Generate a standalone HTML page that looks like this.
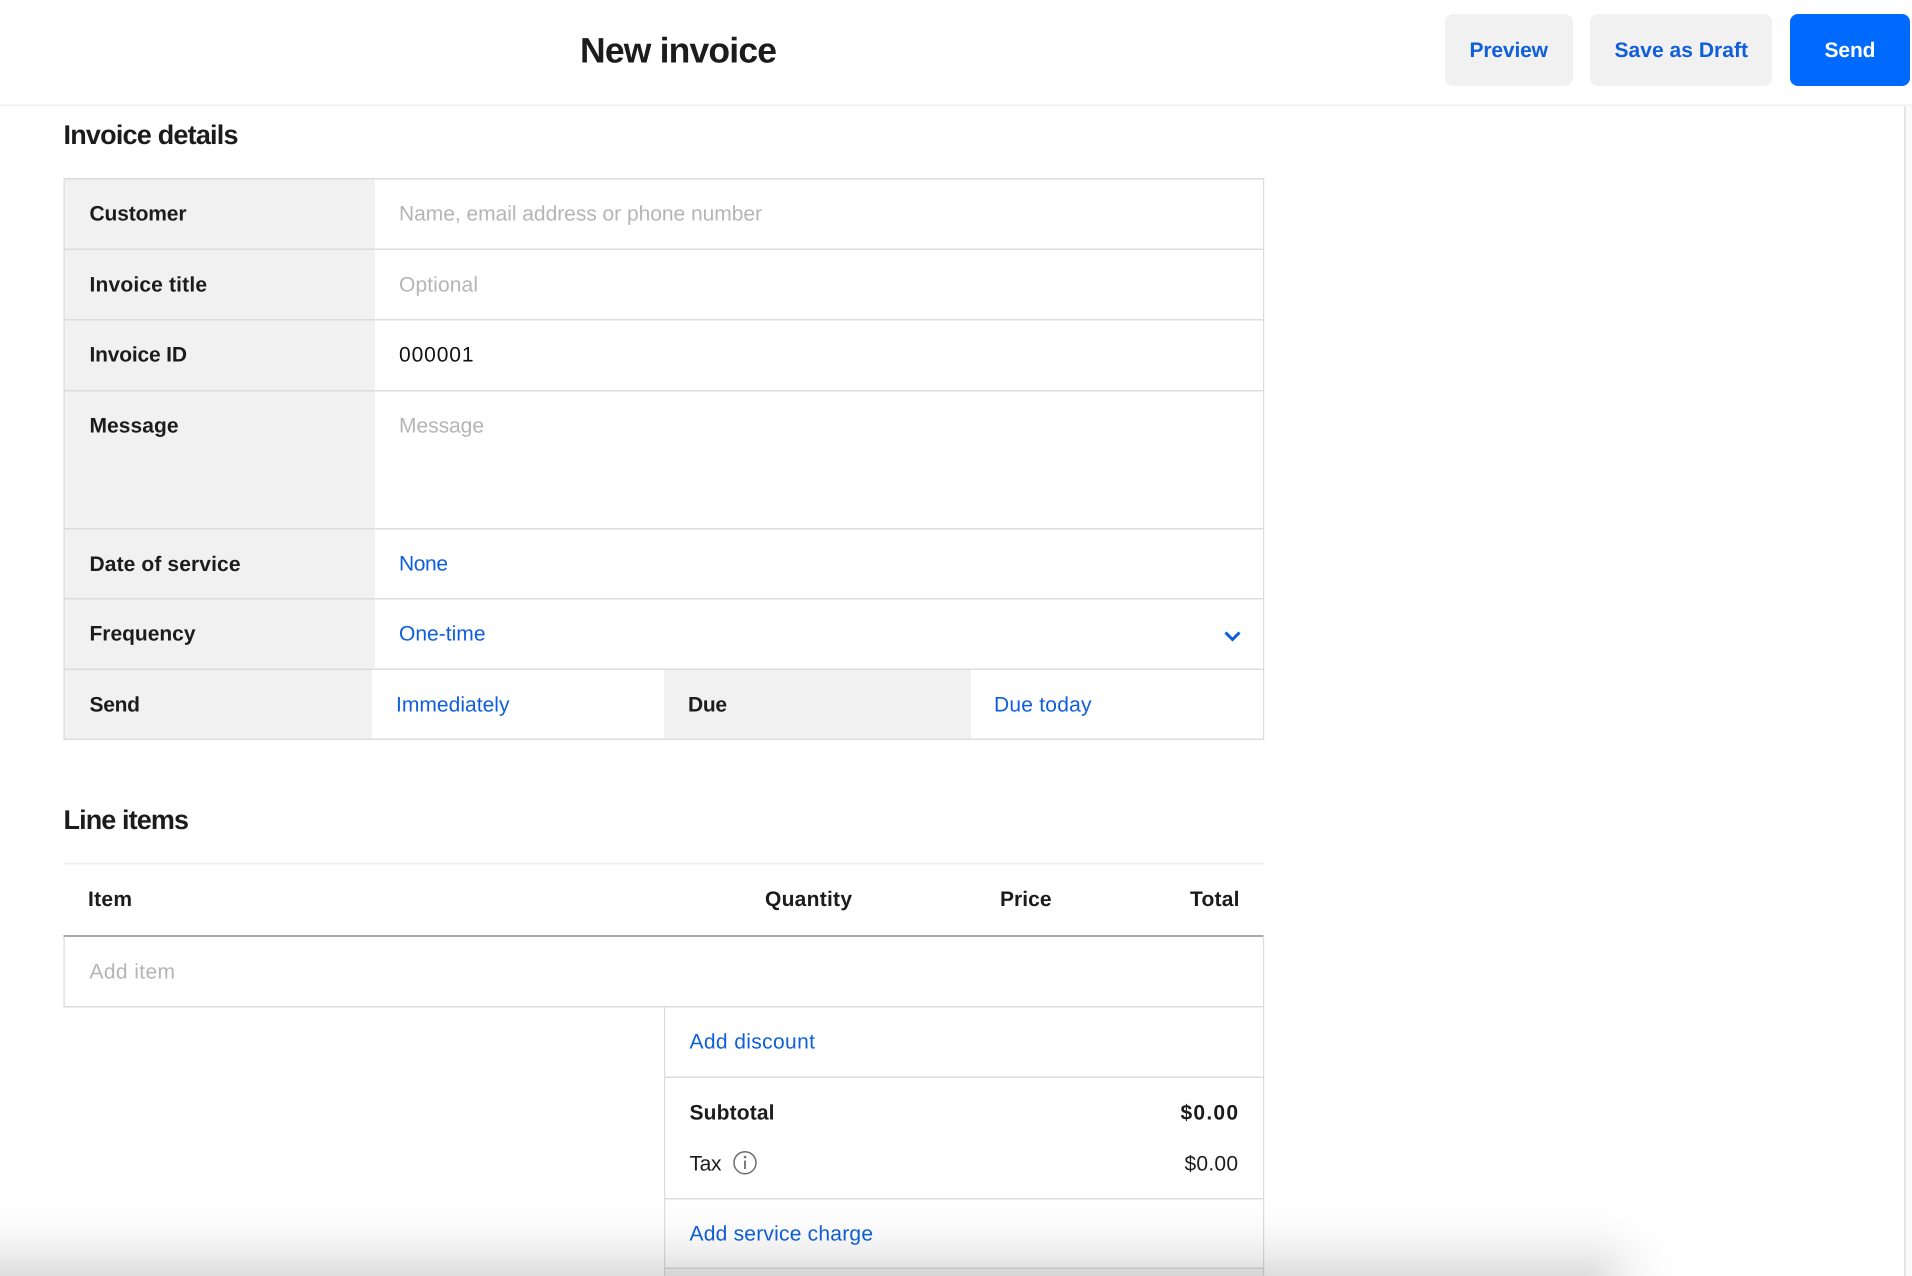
<!DOCTYPE html>
<html lang="en">
<head>
<meta charset="utf-8">
<title>New invoice</title>
<style>
html,body{margin:0;padding:0;background:#fff;overflow:hidden;width:1912px;height:1276px}
svg{display:block}
text{font-family:"Liberation Sans",sans-serif;font-size:21px;fill:#1c1c1c;text-rendering:geometricPrecision}
.b{font-weight:700}
.p{fill:#b5b5b5}
.l{fill:#0f5fdc}
.h{font-weight:700;font-size:27px}
</style>
</head>
<body>
<svg width="1912" height="1276" viewBox="0 0 1912 1276" xmlns="http://www.w3.org/2000/svg">
<defs>
<linearGradient id="vg" x1="0" y1="0" x2="0" y2="1">
<stop offset="0" stop-color="#000" stop-opacity="0"/>
<stop offset=".18" stop-color="#000" stop-opacity=".005"/>
<stop offset=".36" stop-color="#000" stop-opacity=".016"/>
<stop offset=".55" stop-color="#000" stop-opacity=".04"/>
<stop offset=".74" stop-color="#000" stop-opacity=".075"/>
<stop offset="1" stop-color="#000" stop-opacity=".135"/>
</linearGradient>
<radialGradient id="rg" cx="0" cy="1" r="1">
<stop offset="0" stop-color="#000" stop-opacity=".135"/>
<stop offset=".26" stop-color="#000" stop-opacity=".075"/>
<stop offset=".45" stop-color="#000" stop-opacity=".04"/>
<stop offset=".64" stop-color="#000" stop-opacity=".016"/>
<stop offset=".82" stop-color="#000" stop-opacity=".005"/>
<stop offset="1" stop-color="#000" stop-opacity="0"/>
</radialGradient>
</defs>
<rect width="1912" height="1276" fill="#fff"/>

<!-- header -->
<rect x="0" y="104.5" width="1912" height="1.5" fill="#f0f0f0"/>
<rect x="1904" y="106" width="2" height="1170" fill="#e6e6e6"/>
<rect x="1906" y="106" width="6" height="1170" fill="#fbfbfb"/>
<text class="b" x="580" y="62.5" style="font-size:35.5px" textLength="197" lengthAdjust="spacing">New invoice</text>
<rect x="1445" y="14" width="128" height="72" rx="8" fill="#f1f1f1"/>
<rect x="1590" y="14" width="182" height="72" rx="8" fill="#f1f1f1"/>
<rect x="1790" y="14" width="120" height="72" rx="8" fill="#006aff"/>
<text class="b l" x="1469.5" y="57" textLength="78.5" lengthAdjust="spacing">Preview</text>
<text class="b l" x="1614.5" y="57" textLength="133.5" lengthAdjust="spacing">Save as Draft</text>
<text class="b" x="1824.5" y="57" style="fill:#fff" textLength="51" lengthAdjust="spacing">Send</text>

<!-- invoice details -->
<text class="h" x="63.5" y="144" textLength="175" lengthAdjust="spacing">Invoice details</text>
<rect x="64" y="178" width="311" height="491" fill="#f1f1f1"/>
<rect x="64" y="669" width="308" height="70" fill="#f1f1f1"/>
<rect x="664" y="669" width="307" height="70" fill="#f1f1f1"/>
<g fill="#dcdcdc">
<rect x="63.5" y="178" width="1200" height="1.5"/>
<rect x="63.5" y="248.5" width="1200" height="1.5"/>
<rect x="63.5" y="319" width="1200" height="1.5"/>
<rect x="63.5" y="390" width="1200" height="1.5"/>
<rect x="63.5" y="528" width="1200" height="1.5"/>
<rect x="63.5" y="598" width="1200" height="1.5"/>
<rect x="63.5" y="668.5" width="1200" height="1.5"/>
<rect x="63.5" y="738.5" width="1200" height="1.5"/>
<rect x="63.5" y="178" width="1.2" height="562"/>
<rect x="1263" y="178" width="1.2" height="562"/>
</g>
<text class="b" x="89.5" y="220.5" textLength="97" lengthAdjust="spacing">Customer</text>
<text class="b" x="89.5" y="291.5" textLength="117.5" lengthAdjust="spacing">Invoice title</text>
<text class="b" x="89.5" y="361.5" textLength="97.5" lengthAdjust="spacing">Invoice ID</text>
<text class="b" x="89.5" y="432.5" textLength="89" lengthAdjust="spacing">Message</text>
<text class="b" x="89.5" y="571" textLength="151" lengthAdjust="spacing">Date of service</text>
<text class="b" x="89.5" y="640.5" textLength="106" lengthAdjust="spacing">Frequency</text>
<text class="b" x="89.5" y="711.5" textLength="50.5" lengthAdjust="spacing">Send</text>
<text class="b" x="688" y="711.5" textLength="39" lengthAdjust="spacing">Due</text>
<text class="p" x="399" y="220.5" textLength="363" lengthAdjust="spacing">Name, email address or phone number</text>
<text class="p" x="399" y="291.5" textLength="79" lengthAdjust="spacing">Optional</text>
<text x="399" y="361.5" style="fill:#111" textLength="74.5" lengthAdjust="spacing">000001</text>
<text class="p" x="399" y="432.5" textLength="85" lengthAdjust="spacing">Message</text>
<text class="l" x="399" y="570.5" textLength="49" lengthAdjust="spacing">None</text>
<text class="l" x="399" y="640.5" textLength="86.5" lengthAdjust="spacing">One-time</text>
<text class="l" x="396" y="711.5" textLength="113.5" lengthAdjust="spacing">Immediately</text>
<text class="l" x="994" y="711.5" textLength="97.5" lengthAdjust="spacing">Due today</text>
<path d="M1225.5 632.5 L1232.5 639.5 L1239.5 632.5" fill="none" stroke="#0f5fdc" stroke-width="3"/>

<!-- line items -->
<text class="h" x="63.5" y="829" textLength="125.5" lengthAdjust="spacing">Line items</text>
<rect x="63.5" y="862.5" width="1200" height="2" fill="#efefef"/>
<text class="b" x="88" y="906" textLength="44" lengthAdjust="spacing">Item</text>
<text class="b" x="765" y="906" textLength="87" lengthAdjust="spacing">Quantity</text>
<text class="b" x="1000" y="906" textLength="51.5" lengthAdjust="spacing">Price</text>
<text class="b" x="1190" y="906" textLength="49.5" lengthAdjust="spacing">Total</text>
<rect x="63.5" y="935" width="1200" height="2" fill="#a9a9a9"/>
<rect x="664" y="1268.5" width="600" height="8" fill="#f6f6f6"/>
<g fill="#dcdcdc">
<rect x="63.5" y="937" width="1.2" height="69"/>
<rect x="1263" y="937" width="1.2" height="339"/>
<rect x="63.5" y="1006" width="1200" height="1.5"/>
<rect x="664" y="1006" width="1.2" height="270"/>
<rect x="664" y="1076.5" width="600" height="1.5"/>
<rect x="664" y="1198" width="600" height="1.5"/>
<rect x="664" y="1267.5" width="600" height="1.5"/>
</g>
<text class="p" x="89.5" y="978.5" textLength="85.5" lengthAdjust="spacing">Add item</text>
<text class="l" x="689.5" y="1048.5" textLength="125.5" lengthAdjust="spacing">Add discount</text>
<text class="b" x="689.5" y="1119.5" textLength="85" lengthAdjust="spacing">Subtotal</text>
<text class="b" x="1180.5" y="1119.5" textLength="57.5" lengthAdjust="spacing">$0.00</text>
<text x="689.5" y="1170.5" textLength="32" lengthAdjust="spacing">Tax</text>
<text x="1184.5" y="1170.5" textLength="53.5" lengthAdjust="spacing">$0.00</text>
<circle cx="745" cy="1162.7" r="11" fill="none" stroke="#6e6e6e" stroke-width="1.5"/>
<circle cx="745" cy="1157" r="1.3" fill="#6e6e6e"/>
<rect x="744.1" y="1160.5" width="1.8" height="8.5" fill="#6e6e6e"/>
<text class="l" x="689.5" y="1240.5" textLength="183.5" lengthAdjust="spacing">Add service charge</text>

<!-- bottom shadow -->
<rect x="0" y="1196" width="1585" height="80" fill="url(#vg)"/>
<rect x="1585" y="1196" width="105" height="80" fill="url(#rg)"/>
</svg>
</body>
</html>
